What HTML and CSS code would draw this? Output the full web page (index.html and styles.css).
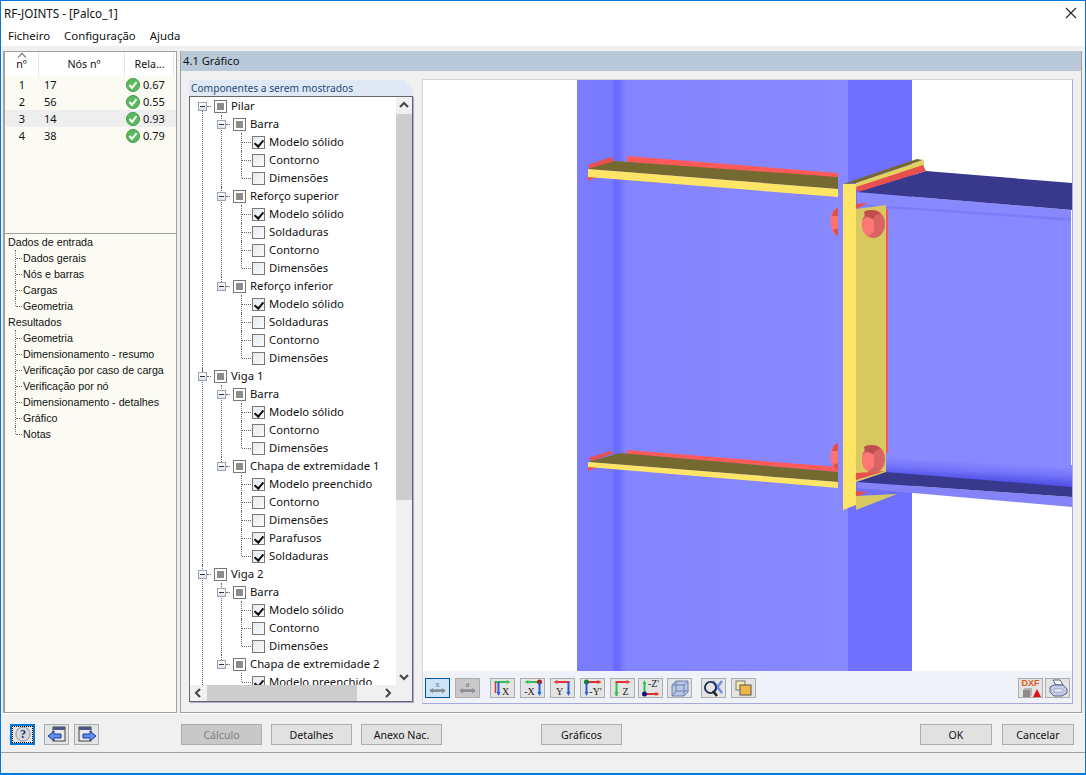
FILE: index.html
```html
<!DOCTYPE html>
<html>

<head>
    <meta http-equiv="Content-Type" content="text/html; charset=utf-8" />
    <title>RF-JOINTS - [Palco_1]</title>
    <link rel="stylesheet" href="styles.css">
</head>

<body>
    <svg class="defs" width="0" height="0">
        <defs>
            <symbol id="ok" viewBox="0 0 14 14">
                <circle cx="7" cy="7" r="6.5" fill="#5cb85c" stroke="#3f9a4a" />
                <path d="M3.5 7 L6 10 L10.5 4.2" fill="none" stroke="#fff" stroke-width="2" />
            </symbol>
            <symbol id="dim" viewBox="0 0 24 20">
                <path d="M4 13 H20" stroke="#8a8f96" stroke-width="3" />
                <path d="M3 13 L7 10 V16 Z M21 13 L17 10 V16 Z" fill="#8a8f96" />
            </symbol>
            <symbol id="bolt" viewBox="0 0 14 14">
                <circle cx="7" cy="7" r="6" fill="none" stroke="#1d2a52" stroke-width="2" />
            </symbol>
        </defs>
    </svg>

    <div class="app">
        <div class="titlebar">
            <span>RF-JOINTS - [Palco_1]</span>
            <svg class="close" width="12" height="12" viewBox="0 0 12 12">
                <path d="M1 1 L11 11 M11 1 L1 11" stroke="#222" stroke-width="1.1" />
            </svg>
        </div>
        <div class="menu">
            <a href="javascript:;">Ficheiro</a>
            <a href="javascript:;">Configuração</a>
            <a href="javascript:;">Ajuda</a>
        </div>

        <div class="main">
            <div class="side">
                <div class="nodes">
                    <div class="nodes-head">
                        <span class="c1">nº</span>
                        <span class="c2">Nós nº</span>
                        <span class="c3">Rela...</span>
                    </div>
                    <div class="nodes-row"><span class="c1">1</span><span class="c2">17</span><span class="c3"><svg width="14" height="14"><use href="#ok" /></svg>0.67</span></div>
                    <div class="nodes-row"><span class="c1">2</span><span class="c2">56</span><span class="c3"><svg width="14" height="14"><use href="#ok" /></svg>0.55</span></div>
                    <div class="nodes-row sel"><span class="c1">3</span><span class="c2">14</span><span class="c3"><svg width="14" height="14"><use href="#ok" /></svg>0.93</span></div>
                    <div class="nodes-row"><span class="c1">4</span><span class="c2">38</span><span class="c3"><svg width="14" height="14"><use href="#ok" /></svg>0.79</span></div>
                </div>
                <ul class="nav">
                    <li>Dados de entrada
                        <ul>
                            <li>Dados gerais</li>
                            <li>Nós e barras</li>
                            <li>Cargas</li>
                            <li>Geometria</li>
                        </ul>
                    </li>
                    <li>Resultados
                        <ul>
                            <li>Geometria</li>
                            <li>Dimensionamento - resumo</li>
                            <li>Verificação por caso de carga</li>
                            <li>Verificação por nó</li>
                            <li>Dimensionamento - detalhes</li>
                            <li>Gráfico</li>
                            <li>Notas</li>
                        </ul>
                    </li>
                </ul>
            </div>

            <div class="content">
                <div class="content-head">4.1 Gráfico</div>
                <div class="content-body">
                    <div class="comp">
                        <div class="comp-title">Componentes a serem mostrados</div>
                        <div class="comp-box">
                            <div class="tree-view">
                                <ul class="tree">
                                    <li><i class="exp"></i><i class="tri"></i>Pilar
                                        <ul>
                                            <li><i class="exp"></i><i class="tri"></i>Barra
                                                <ul>
                                                    <li><i class="chk on"></i>Modelo sólido</li>
                                                    <li><i class="chk"></i>Contorno</li>
                                                    <li><i class="chk"></i>Dimensões</li>
                                                </ul>
                                            </li>
                                            <li><i class="exp"></i><i class="tri"></i>Reforço superior
                                                <ul>
                                                    <li><i class="chk on"></i>Modelo sólido</li>
                                                    <li><i class="chk"></i>Soldaduras</li>
                                                    <li><i class="chk"></i>Contorno</li>
                                                    <li><i class="chk"></i>Dimensões</li>
                                                </ul>
                                            </li>
                                            <li><i class="exp"></i><i class="tri"></i>Reforço inferior
                                                <ul>
                                                    <li><i class="chk on"></i>Modelo sólido</li>
                                                    <li><i class="chk"></i>Soldaduras</li>
                                                    <li><i class="chk"></i>Contorno</li>
                                                    <li><i class="chk"></i>Dimensões</li>
                                                </ul>
                                            </li>
                                        </ul>
                                    </li>
                                    <li><i class="exp"></i><i class="tri"></i>Viga 1
                                        <ul>
                                            <li><i class="exp"></i><i class="tri"></i>Barra
                                                <ul>
                                                    <li><i class="chk on"></i>Modelo sólido</li>
                                                    <li><i class="chk"></i>Contorno</li>
                                                    <li><i class="chk"></i>Dimensões</li>
                                                </ul>
                                            </li>
                                            <li><i class="exp"></i><i class="tri"></i>Chapa de extremidade 1
                                                <ul>
                                                    <li><i class="chk on"></i>Modelo preenchido</li>
                                                    <li><i class="chk"></i>Contorno</li>
                                                    <li><i class="chk"></i>Dimensões</li>
                                                    <li><i class="chk on"></i>Parafusos</li>
                                                    <li><i class="chk on"></i>Soldaduras</li>
                                                </ul>
                                            </li>
                                        </ul>
                                    </li>
                                    <li><i class="exp"></i><i class="tri"></i>Viga 2
                                        <ul>
                                            <li><i class="exp"></i><i class="tri"></i>Barra
                                                <ul>
                                                    <li><i class="chk on"></i>Modelo sólido</li>
                                                    <li><i class="chk"></i>Contorno</li>
                                                    <li><i class="chk"></i>Dimensões</li>
                                                </ul>
                                            </li>
                                            <li><i class="exp"></i><i class="tri"></i>Chapa de extremidade 2
                                                <ul>
                                                    <li><i class="chk on"></i>Modelo preenchido</li>
                                                </ul>
                                            </li>
                                        </ul>
                                    </li>
                                </ul>
                            </div>
                            <div class="vbar">
                                <svg width="16" height="17" viewBox="0 0 16 17"><path d="M4 10 L8 6 L12 10" fill="none" stroke="#444" stroke-width="2" /></svg>
                                <div class="vtrack"><div class="vthumb"></div></div>
                                <svg width="16" height="17" viewBox="0 0 16 17"><path d="M4 7 L8 11 L12 7" fill="none" stroke="#444" stroke-width="2" /></svg>
                            </div>
                            <div class="hbar">
                                <svg width="17" height="16" viewBox="0 0 17 16"><path d="M10 4 L6 8 L10 12" fill="none" stroke="#444" stroke-width="2" /></svg>
                                <div class="htrack"><div class="hthumb"></div></div>
                                <svg width="17" height="16" viewBox="0 0 17 16"><path d="M7 4 L11 8 L7 12" fill="none" stroke="#444" stroke-width="2" /></svg>
                            </div>
                            <div class="corner"></div>
                        </div>
                    </div>

                    <div class="view">
                        <svg class="scene" width="650" height="591" viewBox="422 80 650 591">
                            <defs>
                                <linearGradient id="web" x1="0" x2="1" y1="0" y2="0">
                                    <stop offset="0" stop-color="#7c7cff" />
                                    <stop offset="0.13" stop-color="#7a7aff" />
                                    <stop offset="0.137" stop-color="#6a6aff" />
                                    <stop offset="0.155" stop-color="#6c6cff" />
                                    <stop offset="0.18" stop-color="#8484ff" />
                                    <stop offset="1" stop-color="#8888ff" />
                                </linearGradient>
                                <linearGradient id="fold" gradientUnits="userSpaceOnUse" x1="978" y1="462" x2="977" y2="480">
                                    <stop offset="0" stop-color="#8888ff" />
                                    <stop offset="0.5" stop-color="#7474fa" />
                                    <stop offset="1" stop-color="#5252e8" />
                                </linearGradient>
                            </defs>
                            <!-- pilar -->
                            <rect x="577" y="80" width="271" height="591" fill="url(#web)" />
                            <rect x="848" y="80" width="64" height="591" fill="#7070ff" />

                            <!-- viga -->
                            <path d="M857 192 L1071 210 V490 L857 476 Z" fill="#8888ff" />
                            <path d="M857 204 L1071 218 V221 L857 206 Z" fill="#7c7cf8" />
                            <path d="M886 449 L1072 465 V490 L886 474 Z" fill="url(#fold)" />
                            <path d="M857 192 L926 171 L1072 183 V210 Z" fill="#38388c" />
                            <path d="M857 482 L857 488 L1072 507 V497 Z" fill="#8484f8" />
                            <path d="M857 482 L885 472 L1072 487 V497 Z" fill="#38388c" />

                            <!-- reforco superior -->
                            <path d="M588 165 L611 157 L615 162 L590 170 Z M588 177 L598 177 L588 181 Z" fill="#e85050" />
                            <path d="M627 156 L838 173 V179 L627 162 Z" fill="#ff5a5a" />
                            <path d="M588 169 L615 161 L838 177 V189 Z" fill="#746a30" />
                            <path d="M588 169 L838 189 V197 L588 177 Z" fill="#ffe566" />

                            <!-- reforco inferior -->
                            <path d="M588 458 L611 451 L614 453 L592 461 Z M588 467 L598 467 L588 471 Z" fill="#e85050" />
                            <path d="M627 450 L838 467 V472 L627 454 Z" fill="#ff5a5a" />
                            <path d="M588 462 L620 453 L838 472 V482 Z" fill="#746a30" />
                            <path d="M588 462 L838 482 V488 L588 467 Z" fill="#ffe566" />

                            <!-- parafusos atras -->
                            <path d="M838 208 C828 209 828 233 838 236 Z M838 443 C828 445 828 468 838 470 Z" fill="#ff7070" />
                            <path d="M838 208 C835 209 833 211 832 216 L838 216 Z M838 228 L833 230 C834 233 836 235 838 236 Z M838 443 C835 444 833 446 832 451 L838 451 Z M838 463 L833 465 C834 468 836 469 838 470 Z" fill="#d85050" />

                            <!-- chapa -->
                            <path d="M886 209 H888 V453 H886 Z" fill="#f25a5a" />
                            <path d="M856 204 L868 203 L856 209 Z M856 491 L868 492 L856 497 Z" fill="#e85050" />
                            <path d="M856 209 L886 205 V472 L856 482 Z" fill="#d8c860" />
                            <path d="M856 496 L897 494 L856 510 Z" fill="#d8c860" />
                            <path d="M843 184 L917 159 L923 160 L856 183 Z" fill="#746a30" />
                            <path d="M856 183 L924 160 V166 L856 189 Z" fill="#e3d162" />
                            <path d="M856 187 L923 165 L926 171 L858 192 Z" fill="#e85050" />
                            <path d="M856 473 L885 471 L856 480 Z" fill="#e85050" />
                            <path d="M843 184 H856 V505 L843 510 Z" fill="#ffe566" />

                            <!-- cabecas -->
                            <ellipse cx="873.500" cy="224" rx="11.500" ry="14" fill="#d96464" />
                            <path d="M864 212 C867 209 876 209 881 214 C876 214 874 217 873 219 L865 216 Z" fill="#bf4e4e" />
                            <path d="M862 220 L868 217 L874 220 V232 L868 236 L863 232 Z" fill="#ff7676" />
                            <ellipse cx="873.500" cy="459" rx="11.500" ry="14" fill="#d96464" />
                            <path d="M864 447 C867 444 876 444 881 449 C876 449 874 452 873 454 L865 451 Z" fill="#bf4e4e" />
                            <path d="M862 455 L868 452 L874 455 V467 L868 471 L863 467 Z" fill="#ff7676" />
                        </svg>
                        <div class="tools">
                            <button class="tbtn active"><svg width="23" height="18" viewBox="0 0 24 20"><use href="#dim" /><text x="12" y="9" class="ico-t">x</text></svg></button>
                            <button class="tbtn off"><svg width="23" height="18" viewBox="0 0 24 20"><use href="#dim" /><text x="12" y="9" class="ico-t">a</text></svg></button>
                            <span class="g1"></span>
                            <button class="tbtn"><svg width="23" height="18" viewBox="0 0 22 18"><path d="M3 3 H15" stroke="#2fbf4f" stroke-width="2" /><path d="M15 1 L19 3 L15 5 Z" fill="#2fbf4f" /><path d="M4 3 V14" stroke="#e03030" stroke-width="1.5" /><path d="M7 3 V14" stroke="#2060e0" stroke-width="2" /><path d="M5 13 L7 17 L9 13 Z" fill="#2060e0" /><text x="14" y="16" class="ico-t">X</text></svg></button>
                            <button class="tbtn"><svg width="23" height="18" viewBox="0 0 22 18"><path d="M7 3 H18" stroke="#2fbf4f" stroke-width="2" /><path d="M7 1 L3 3 L7 5 Z" fill="#2fbf4f" /><circle cx="18" cy="3" r="2.500" fill="#c01818" /><path d="M18 3 V14" stroke="#2060e0" stroke-width="2" /><path d="M16 13 L18 17 L20 13 Z" fill="#2060e0" /><text x="8" y="16" class="ico-t">-X</text></svg></button>
                            <button class="tbtn"><svg width="23" height="18" viewBox="0 0 22 18"><path d="M6 3 H18" stroke="#e03030" stroke-width="2" /><path d="M6 1 L2 3 L6 5 Z" fill="#e03030" /><path d="M17 3 V14" stroke="#2060e0" stroke-width="2" /><path d="M15 13 L17 17 L19 13 Z" fill="#2060e0" /><text x="8" y="16" class="ico-t">Y</text></svg></button>
                            <button class="tbtn"><svg width="23" height="18" viewBox="0 0 22 18"><path d="M5 3 H17" stroke="#e03030" stroke-width="2" /><path d="M16 1 L20 3 L16 5 Z" fill="#e03030" /><circle cx="5" cy="3" r="2.500" fill="#108020" /><path d="M5 3 V14" stroke="#2060e0" stroke-width="2" /><path d="M3 13 L5 17 L7 13 Z" fill="#2060e0" /><text x="14" y="16" class="ico-t">-Y'</text></svg></button>
                            <button class="tbtn"><svg width="23" height="18" viewBox="0 0 22 18"><path d="M4 3 H15" stroke="#e03030" stroke-width="2" /><path d="M15 1 L19 3 L15 5 Z" fill="#e03030" /><path d="M5 4 V17" stroke="#2fbf4f" stroke-width="2" /><path d="M3 13 L5 17 L7 13 Z" fill="#2fbf4f" /><text x="14" y="16" class="ico-t">Z</text></svg></button>
                            <button class="tbtn t-zp"><svg width="23" height="18" viewBox="0 0 22 18"><path d="M5 4 V15" stroke="#2fbf4f" stroke-width="2" /><path d="M3 5 L5 1 L7 5 Z" fill="#2fbf4f" /><path d="M5 15 H17" stroke="#e03030" stroke-width="2" /><path d="M16 13 L20 15 L16 17 Z" fill="#e03030" /><circle cx="5" cy="15" r="2.500" fill="#101080" /><text x="14" y="8" class="ico-t">-Z'</text></svg></button>
                            <button class="tbtn t-box"><svg width="20" height="18" viewBox="0 0 20 18"><path d="M6 2 H18 V13 L14 17 H2 V6 Z" fill="#b8c6e4" stroke="#6f82b0" /><path d="M6 2 L2 6 M18 2 L14 6 H2 M14 6 V17 M6 2 V12 H18 M6 12 L2 17" fill="none" stroke="#6f82b0" /></svg></button>
                            <button class="tbtn t-find"><svg width="22" height="18" viewBox="0 0 22 18"><path d="M10 2 L19 14 M19 2 L10 14" stroke="#6f8fe0" stroke-width="2.500" /><use href="#bolt" x="1" y="2" width="13" height="13" /><path d="M10 12 L14 17" stroke="#222" stroke-width="2.500" /></svg></button>
                            <button class="tbtn"><svg width="20" height="18" viewBox="0 0 20 18"><rect x="2" y="2" width="9" height="9" fill="#f8e9a8" stroke="#777" /><rect x="6" y="6" width="11" height="10" fill="#f0b848" stroke="#555" /></svg></button>
                            <span class="grow"></span>
                            <button class="tbtn dxf"><span>DXF</span><svg width="20" height="9" viewBox="0 0 20 9"><path d="M2 2 H9 V9 H2 Z" fill="#8a8a8a" /><path d="M2 2 L4 0 H11 L9 2 Z M9 2 L11 0 V7 L9 9 Z" fill="#b4b4b4" /><path d="M12 9 L16 1 L20 9 Z" fill="#e01010" /></svg></button>
                            <button class="tbtn"><svg width="20" height="18" viewBox="0 0 20 18"><path d="M5 1 H12 L15 6 H8 Z" fill="#fff" stroke="#55608c" /><path d="M2 8 L6 6 H15 L19 10 V14 L14 17 H6 L2 13 Z" fill="#c3cde8" stroke="#55608c" /><path d="M6 10 H15 L14 13 H6 Z" fill="#eef1fa" stroke="#7f8ab0" stroke-width=".6" /></svg></button>
                        </div>
                    </div>
                </div>
            </div>
        </div>

        <div class="footer">
            <div class="foot-icons">
                <button class="ibtn focus"><svg width="18" height="17" viewBox="0 0 18 18"><circle cx="9" cy="8.500" r="7.500" fill="#d7d7dc" stroke="#8d8d95" /><text x="9" y="13" class="help-t">?</text></svg></button>
                <button class="ibtn"><svg width="20" height="18" viewBox="0 0 20 18"><rect x="6" y="1" width="12" height="14" fill="#e8e8ee" stroke="#444" /><rect x="6" y="1" width="12" height="3" fill="#4a5a86" /><path d="M1 10 L7 5 V8 H14 V12 H7 V15 Z" fill="#5f8ef0" stroke="#1b3f94" /></svg></button>
                <button class="ibtn"><svg width="20" height="18" viewBox="0 0 20 18"><rect x="2" y="1" width="12" height="14" fill="#e8e8ee" stroke="#444" /><rect x="2" y="1" width="12" height="3" fill="#4a5a86" /><path d="M19 10 L13 5 V8 H6 V12 H13 V15 Z" fill="#5f8ef0" stroke="#1b3f94" /></svg></button>
            </div>
            <button class="btn disabled">Cálculo</button>
            <button class="btn">Detalhes</button>
            <button class="btn">Anexo Nac.</button>
            <button class="btn graficos">Gráficos</button>
            <span class="grow"></span>
            <button class="btn ok">OK</button>
            <button class="btn ok">Cancelar</button>
        </div>
        <div class="status"></div>
    </div>
</body>

</html>
```

FILE: styles.css
```css
* {
    margin: 0;
    padding: 0;
    box-sizing: border-box;
    list-style: none;
}

body {
    background: #f0f0f0;
    font-family: "Noto Sans", "Liberation Sans", sans-serif;
    font-size: 11px;
    color: #111;
    overflow: hidden;
}

.defs {
    position: absolute;
}

.app {
    width: 1086px;
    height: 775px;
    display: flex;
    flex-direction: column;
    border-top: 1px solid #0078d7;
    border-bottom: 2px solid #0078d7;
    border-left: 1px solid #0078d7;
    border-right: 1px solid #0078d7;
    background: #f0f0f0;
}

.titlebar {
    height: 24px;
    background: #fff;
    font-size: 11.700px;
    line-height: 24px;
    padding-left: 3px;
    display: flex;
    justify-content: space-between;
    align-items: center;
}

.close {
    margin-right: 8px;
}

.menu {
    height: 21px;
    background: #fff;
    display: flex;
    gap: 14px;
    padding-left: 7px;
    font-size: 11.400px;
    line-height: 21px;
}

.menu a {
    color: #111;
    text-decoration: none;
}

.main {
    height: 667px;
    padding: 5px 2px 0 2px;
    display: flex;
    gap: 3px;
}

.side {
    width: 174px;
    display: flex;
    flex-direction: column;
}

.nodes {
    height: 182px;
    background: #fbfbf3;
    border: 1px solid #a0a0a0;
    border-bottom: 0;
    border-left-width: 2px;
}

.nodes-head {
    height: 24px;
    display: flex;
    background: #fff;
    line-height: 24px;
    position: relative;
    font-size: 10.700px;
}

.nodes-head::before {
    content: "";
    position: absolute;
    left: 14px;
    top: 2px;
    width: 5px;
    height: 5px;
    border-left: 1px solid #666;
    border-top: 1px solid #666;
    transform: rotate(45deg);
}

.nodes-head span {
    border-right: 1px solid #e5e5e5;
    text-align: center;
}

.nodes-row {
    height: 17px;
    display: flex;
    line-height: 17px;
}

.nodes-row.sel {
    background: #eeeeee;
}

.c1 {
    width: 34px;
    text-align: center;
}

.c2 {
    width: 86px;
    padding-left: 5px;
}

.c3 {
    width: 49px;
    display: flex;
    align-items: center;
    gap: 3px;
    padding-left: 1px;
}

.nodes-head .c3 {
    display: block;
}

.nav {
    flex: 1;
    background: #fbfbf3;
    border: 1px solid #a0a0a0;
    border-left-width: 2px;
    padding: 0 0 0 3px;
    line-height: 16px;
    font-family: "Liberation Sans", sans-serif;
    font-size: 10.700px;
}

.nav li ul li {
    padding-left: 15px;
    position: relative;
}

.nav li ul li::before {
    content: "";
    position: absolute;
    left: 7px;
    top: 0;
    height: 100%;
    border-left: 1px dotted #777;
}

.nav li ul li:last-child::before {
    height: 8px;
}

.nav li ul li::after {
    content: "";
    position: absolute;
    left: 8px;
    top: 8px;
    width: 6px;
    border-top: 1px dotted #777;
}

.content {
    width: 902px;
    display: flex;
    flex-direction: column;
    background: #f0f0f0;
    border-left: 1px solid #a0a0a0;
    border-right: 1px solid #a0a0a0;
    border-bottom: 1px solid #a0a0a0;
}

.content-head {
    height: 20px;
    background: #b9c9d9;
    line-height: 20px;
    padding-left: 2px;
    font-size: 11.200px;
}

.content-body {
    flex: 1;
    display: flex;
    gap: 9px;
    padding: 9px 8px 8px 8px;
}

.comp {
    width: 224px;
    display: flex;
    flex-direction: column;
}

.comp-title {
    height: 16px;
    background: #dfe8f5;
    color: #1f4a78;
    line-height: 16px;
    padding-left: 2px;
    font-size: 10.200px;
    clip-path: polygon(0 0, 215px 0, 100% 9px, 100% 100%, 0 100%);
}

.comp-box {
    flex: none;
    display: grid;
    grid-template-columns: 206px 16px;
    grid-template-rows: 588px 16px;
    background: #fff;
    border: 1px solid #666;
    box-shadow: 1px 1px 0 #a9a9e2;
}

.tree-view {
    overflow: hidden;
}

/* niveis da arvore: raiz, barra/chapa, opcoes */
.tree {
    padding-left: 8px;
    font-size: 11.300px;
}

.tree li {
    position: relative;
    line-height: 18px;
    white-space: nowrap;
}

.tree > li {
    padding-left: 16px;
}

.tree > li > ul {
    margin-left: 3px;
}

.tree > li > ul > li {
    padding-left: 16px;
}

.tree > li > ul > li > ul > li {
    padding-left: 19px;
}

.tree > li::before,
.tree > li > ul > li::before {
    content: "";
    position: absolute;
    left: 4px;
    top: 0;
    height: 100%;
    border-left: 1px dotted #666;
}

.tree > li::after,
.tree > li > ul > li::after {
    content: "";
    position: absolute;
    left: 9px;
    top: 9px;
    width: 4px;
    border-top: 1px dotted #666;
}

.tree > li:first-child::before {
    top: 9px;
}

.tree > li > ul > li:last-child::before {
    height: 9px;
}

.tree > li > ul > li > ul > li::before {
    content: "";
    position: absolute;
    left: 8px;
    top: 0;
    height: 100%;
    border-left: 1px dotted #666;
}

.tree > li > ul > li > ul > li:last-child::before {
    height: 9px;
}

.tree > li > ul > li > ul > li::after {
    content: "";
    position: absolute;
    left: 9px;
    top: 9px;
    width: 9px;
    border-top: 1px dotted #666;
}

.exp {
    position: absolute;
    left: 0;
    top: 5px;
    width: 9px;
    height: 9px;
    background: linear-gradient(#fff, #dde1ea);
    border: 1px solid #9aa3b5;
    z-index: 1;
}

.exp::after {
    content: "";
    position: absolute;
    left: 1px;
    top: 3px;
    width: 5px;
    height: 1px;
    background: #333;
}

.tri {
    display: inline-block;
    width: 13px;
    height: 13px;
    margin-right: 4px;
    vertical-align: -3px;
    border: 1px solid #777;
    background: #fff;
    position: relative;
}

.tri::after {
    content: "";
    position: absolute;
    left: 2px;
    top: 2px;
    width: 7px;
    height: 7px;
    background: #8c8c8c;
}

.chk {
    display: inline-block;
    width: 13px;
    height: 13px;
    margin-right: 4px;
    vertical-align: -3px;
    border: 1px solid #777;
    background: linear-gradient(135deg, #e6e9ee, #fbfbfc);
    position: relative;
}

.chk.on::after {
    content: "";
    position: absolute;
    left: 3px;
    top: 1px;
    width: 4px;
    height: 7px;
    border-right: 2px solid #111;
    border-bottom: 2px solid #111;
    transform: rotate(40deg);
}

.vbar {
    display: flex;
    flex-direction: column;
    background: #f0f0f0;
}

.vtrack {
    flex: 1;
}

.vthumb {
    height: 386px;
    background: #cdcdcd;
}

.hbar {
    display: flex;
    background: #f0f0f0;
}

.htrack {
    flex: 1;
}

.hthumb {
    width: 150px;
    height: 16px;
    background: #cdcdcd;
}

.corner {
    background: #f0f0f0;
}

.view {
    width: 652px;
    margin-top: -1px;
    display: flex;
    flex-direction: column;
    border: 1px solid #d4d4d4;
    border-bottom: 1px solid #a9a9e2;
    border-right: 1px solid #a9a9e2;
    background: #fff;
}

.scene {
    display: block;
    flex: none;
    margin-left: -1px;
}

.tools {
    flex: 1;
    background: #eff3f9;
    display: flex;
    align-items: flex-start;
    gap: 5px;
    padding: 7px 2px 0 2px;
}

.tbtn {
    width: 25px;
    height: 20px;
    flex: none;
    border: 1px solid #adadad;
    background: #e4e4e4;
    display: flex;
    align-items: center;
    justify-content: center;
    overflow: hidden;
}

.tbtn.t-zp {
    margin-left: -2px;
}

.tbtn.t-box {
    margin-left: -1px;
}

.tbtn.t-find {
    margin-left: 4px;
}

.tbtn.active {
    background: #cce4f7;
    border-color: #005499;
}

.tbtn.off {
    background: #c8c8c8;
}

.ico-t {
    font-family: "Liberation Serif", serif;
    font-size: 10px;
    text-anchor: middle;
    fill: #222;
}

.tbtn.active .ico-t {
    fill: #6f7680;
}

.tbtn.off .ico-t {
    fill: #777;
}

.tbtn.dxf {
    flex-direction: column;
    font-size: 9px;
    line-height: 9px;
    font-weight: bold;
    color: #d8601a;
    margin-right: -3px;
}

.g1 {
    width: 0;
}

.grow {
    flex: 1;
}

.footer {
    height: 39px;
    padding: 10px 11px 0 9px;
    display: flex;
    align-items: flex-start;
    gap: 9px;
    border-top: 1px solid #fff;
}

.foot-icons {
    width: 162px;
    display: flex;
    gap: 5px;
    flex: none;
}

.ibtn {
    width: 25px;
    height: 21px;
    border: 1px solid #adadad;
    background: #e4e4e4;
    display: flex;
    align-items: center;
    justify-content: center;
}

.ibtn.focus {
    border: 2px solid #0078d7;
    outline: 1px dotted #000;
    outline-offset: -3px;
    margin-right: 4px;
}

.help-t {
    font-family: "Liberation Serif", serif;
    font-size: 13px;
    font-weight: bold;
    text-anchor: middle;
    fill: #23336a;
}

.btn {
    width: 81px;
    height: 21px;
    border: 1px solid #adadad;
    background: #e1e1e1;
    font-family: "Noto Sans", "Liberation Sans", sans-serif;
    font-size: 10.600px;
    color: #111;
}

.btn.disabled {
    background: #c8c8c8;
    color: #808080;
}

.btn.graficos {
    margin-left: 90px;
}

.btn.ok {
    width: 72px;
}

.btn.ok + .btn.ok {
    margin-left: 1px;
}

.status {
    flex: 1;
    border-top: 1px solid #a0a0a0;
}
```
